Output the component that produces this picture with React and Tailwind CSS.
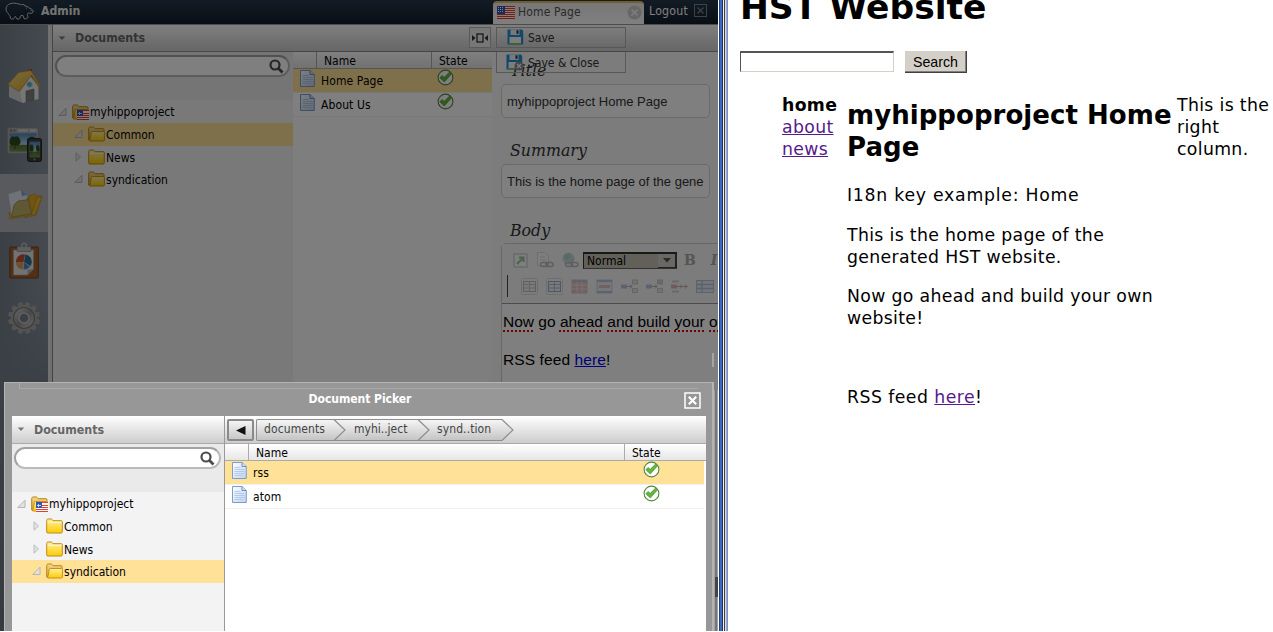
import React from "react";

const Defs = () => (
  <svg width="0" height="0" className="absolute">
    <defs>
      <linearGradient id="fold" x1="0" y1="0" x2="0" y2="1">
        <stop offset="0" stopColor="#fff0a0" />
        <stop offset="1" stopColor="#fdcc00" />
      </linearGradient>
      <linearGradient id="foldBack" x1="0" y1="0" x2="0" y2="1">
        <stop offset="0" stopColor="#f3d78a" />
        <stop offset="1" stopColor="#d9a62e" />
      </linearGradient>
      <linearGradient id="gold" x1="0" y1="0" x2="1" y2="1">
        <stop offset="0" stopColor="#f6dc7c" />
        <stop offset="1" stopColor="#d8a020" />
      </linearGradient>
      <linearGradient id="steel" x1="0" y1="0" x2="1" y2="1">
        <stop offset="0" stopColor="#d4d4d4" />
        <stop offset="0.5" stopColor="#8f8f8f" />
        <stop offset="1" stopColor="#cfcfcf" />
      </linearGradient>
      <linearGradient id="crumb" x1="0" y1="0" x2="0" y2="1">
        <stop offset="0" stopColor="#f6f6f6" />
        <stop offset="1" stopColor="#c4c4c4" />
      </linearGradient>
      <linearGradient id="page" x1="0" y1="0" x2="1" y2="1">
        <stop offset="0" stopColor="#ffffff" />
        <stop offset="1" stopColor="#bcd3f2" />
      </linearGradient>
      <linearGradient id="sky" x1="0" y1="0" x2="0" y2="1">
        <stop offset="0" stopColor="#4a86bd" />
        <stop offset="0.6" stopColor="#b4cfe0" />
        <stop offset="0.66" stopColor="#55753a" />
        <stop offset="1" stopColor="#6a8c48" />
      </linearGradient>
    </defs>
  </svg>
);

const Hippo = () => (
  <svg width="32" height="20" viewBox="0 0 32 20" fill="none" stroke="#c9d0d6" strokeWidth="1">
    <path d="M5.5 3.5 C8 1.5 13 2 16 3 C18 3.6 19.5 4 21 3.5 L22 5 C24 5 25.5 6 27 7.5 C29 8 30.5 9 30 11 C29.5 12.5 27 12.5 25.5 12 C24 12.5 24 14 25 15.5 C25 17.5 22.5 18.5 21 17.5 L20 14.5 C18.5 14 17 15 17 16 C17.5 18 15.5 18.5 14 18 L12.5 15.5 L11.5 16 C11.5 18.5 8.5 18.5 7.5 17.5 C7.5 15 6 14 5.2 12.5 C2.5 10 2 6 5.5 3.5 Z" />
    <path d="M23.5 6.5v1M28 9v1" />
  </svg>
);

const Flag = ({ w = 18, h = 13 }) => (
  <svg width={w} height={h} viewBox="0 0 18 13" shapeRendering="crispEdges" className="shrink-0">
    <rect width="18" height="13" fill="#fff" />
    {[0, 2, 4, 6, 8, 10, 12].map((y) => (
      <rect key={y} y={y} width="18" height="1" fill="#e8402c" />
    ))}
    <rect width="8" height="8" fill="#3355b8" />
    {[1, 3, 5].map((y) => [1, 3, 5].map((x) => <rect key={x + "-" + y} x={x} y={y} width="1" height="1" fill="#fff" />))}
  </svg>
);

const SmallFlag = () => (
  <svg width="12" height="10" viewBox="0 0 12 10" shapeRendering="crispEdges">
    <rect width="12" height="10" fill="#fff" />
    {[0, 3, 5, 7, 9].map((y) => (
      <rect key={y} y={y} width="12" height="1" fill="#e0402c" />
    ))}
    <rect width="6" height="6" fill="#3355b8" />
    <path d="M2.500 1.500v3M1 3h3.500" stroke="#c8d4f4" />
  </svg>
);

const Folder = ({ open }) => (
  <svg width="17" height="16" viewBox="0 0 17 16" className="shrink-0">
    {open ? (
      <>
        <path d="M.7 14V2.6C.7 1.5 1.3 1 2.2 1h3c.8 0 1.2.9 1.8 1.7h8c.8 0 1 .5 1 1.1V14z" fill="url(#foldBack)" stroke="#b9861b" />
        <path d="M1.6 15 3.4 6.2c.1-.5.4-.7.9-.7h11.2c.6 0 .9.3.9.9V13.900c0 .7-.3 1.100-1 1.100z" fill="url(#fold)" stroke="#c8921c" />
      </>
    ) : (
      <>
        <path d="M.7 14V2.600C.7 1.500 1.300 1 2.200 1h3c.8 0 1.200.9 1.800 1.700h8.300c.8 0 1 .5 1 1.100V13.800c0 .8-.4 1.200-1.200 1.200H2C1.200 15 .7 14.700.7 14z" fill="url(#fold)" stroke="#c08a18" />
        <path d="M1.500 4.300h14" stroke="#fffbe0" strokeWidth=".9" />
      </>
    )}
  </svg>
);

const RootFolder = () => (
  <span className="relative flex">
    <Folder open />
    <span className="absolute top-[6px] left-[5px] flex">
      <SmallFlag />
    </span>
  </span>
);

const Twist = ({ open }) => (
  <svg width="9" height="10" viewBox="0 0 9 10" className="shrink-0">
    {open ? (
      <path d="M8 1.200V8.500H.8z" fill="#e2e2e2" stroke="#b0b0b0" strokeWidth=".9" />
    ) : (
      <path d="M2 .8 6.500 5 2 9.200z" fill="#dfe3e6" stroke="#b3b8bc" strokeWidth=".9" />
    )}
  </svg>
);

const Doc = () => (
  <svg width="15" height="17" viewBox="0 0 15 17" className="shrink-0">
    <path d="M.5 .5h9.500L14.300 4.500v12H.5z" fill="url(#page)" stroke="#7f9cc9" />
    <path d="M10 .5v4h4.300" fill="#cfe0f7" stroke="#6f8fc2" />
    <path d="M2.500 5.500h6M2.500 7.500h10M2.500 9.500h10M2.500 11.500h10M2.500 13.500h8" stroke="#aac2e4" strokeWidth=".8" />
  </svg>
);

const Ok = () => (
  <svg width="17" height="17" viewBox="0 0 17 17" className="shrink-0">
    <circle cx="8.500" cy="8.500" r="7.400" fill="#fff" stroke="#58873f" strokeWidth="1.100" />
    <path d="M2.800 8.800 5 6.400 7.200 8.300 12.600 3 14.400 5 7.300 13z" fill="#62b63c" stroke="#3f8a24" strokeWidth=".6" />
  </svg>
);

const Glass = () => (
  <svg width="15" height="15" viewBox="0 0 15 15" fill="none" stroke="#4c4c4c">
    <circle cx="6" cy="6" r="4.500" strokeWidth="2.200" />
    <path d="M9.500 9.500 13.500 13.500" strokeWidth="2.800" />
  </svg>
);

const Floppy = ({ closing }) => (
  <svg width="18" height="17" viewBox="0 0 18 17" className="shrink-0">
    <path d="M.5 .5h14.500l1.200 1.500v13.500H.5z" fill="#2191d6" />
    <rect x="3.500" y=".5" width="9" height="5.500" fill="#eef3f6" />
    <rect x="9.500" y="1.300" width="2" height="3.500" fill="#333" />
    <rect x="2.500" y="8" width="11.500" height="7" fill="#fafafa" />
    <rect x="2.500" y="14" width="11.500" height="1.500" fill="#7fc64a" />
    {closing && (
      <g>
        <circle cx="13" cy="12" r="4.500" fill="#8d8d8d" />
        <path d="M11 10l4 4M15 10l-4 4" stroke="#fff" strokeWidth="1.300" />
      </g>
    )}
  </svg>
);

const House = () => (
  <svg width="36" height="38" viewBox="0 0 36 38">
    <path d="M3 18.500 13.500 9 18 36 3 30z" fill="#c4c4c4" />
    <path d="M13.500 24.500 24 9 32.500 19V32L16.500 36z" fill="#ececec" />
    <path d="M3 30V19L13 24.500 16.500 36z" fill="#d2d2d2" />
    <path d="M21.500 3 26 2 26.500 8 22 8z" fill="#c9301a" />
    <path d="M2 17.500 12.500 5.500 25 3.500 34.500 19 32.500 19.500 25.500 8 13.500 24.500z" fill="url(#gold)" stroke="#b98a28" strokeWidth=".7" />
    <circle cx="23.500" cy="17.500" r="2.700" fill="#5fa8cc" stroke="#b8d0dc" />
    <path d="M20 24 28 22V33L20 35z" fill="#808080" stroke="#666" strokeWidth=".6" />
  </svg>
);

const Trees = () => (
  <>
    <path d="M0 8 C0 3 3 1 5 3 C8 1 11 4 11 8 C11 11 8 12 6 11 V15 H5 V11 C2 12 0 11 0 8Z" fill="#2f4a1d" />
    <path d="M18 9 C17 4 20 2 24 3 C27 4 28 6 28 9 C28 12 25 12 24 11 V15 H23 V11 C21 12 19 11 18 9Z" fill="#2f4a1d" />
  </>
);

const Screens = () => (
  <svg width="36" height="38" viewBox="0 0 36 38">
    <rect x=".5" y="1.500" width="31" height="26" rx="1.500" fill="#a8a8a8" stroke="#8a8a8a" />
    <path d="M3 4.500h2M6.500 4.500h2" stroke="#777" strokeWidth="2" />
    <path d="M11 4.500h10M22.500 4.500h7" stroke="#d0d0d0" strokeWidth="2.500" />
    <rect x="2.500" y="7.500" width="27" height="18" fill="url(#sky)" />
    <g transform="translate(2.500 8)">
      <Trees />
    </g>
    <rect x="20.500" y="12.500" width="14" height="23" rx="2" fill="#3c3c3c" stroke="#222" />
    <rect x="22.500" y="15.500" width="10.500" height="16" fill="url(#sky)" />
    <g transform="translate(22.500 16.500) scale(.37 .8)">
      <Trees />
    </g>
    <circle cx="27.500" cy="33.500" r="1" fill="#999" />
  </svg>
);

const OpenDocs = () => (
  <svg width="36" height="34" viewBox="0 0 36 34">
    <path d="M22 8 28 6 30 8 35 8 29 27 18 30z" fill="#e0a824" stroke="#b98510" strokeWidth=".6" />
    <path d="M1 6 14 2 20 7 24 28 5 30z" fill="#dfe4ec" stroke="#aab4c2" strokeWidth=".6" />
    <path d="M14 2 15 8 20 7z" fill="#7fa3d4" />
    <path d="M2 24 2.500 31 28 27 35 9 30 9 24.500 26 5 29.500z" fill="#e6b433" stroke="#b98510" strokeWidth=".6" />
    <path d="M7 17 11 13 19 12 21 10 24.500 26 4.500 29z" fill="#bfb168" stroke="#8f7f32" strokeWidth=".7" />
  </svg>
);

const Clipboard = () => (
  <svg width="30" height="37" viewBox="0 0 30 37">
    <rect x=".8" y="5" width="28.500" height="31" rx="1" fill="#a0602c" stroke="#7c3f12" />
    <path d="M4.500 8h20v19l-6 6h-14z" fill="#e4e4e4" stroke="#aaa" strokeWidth=".6" />
    <path d="M18.500 33v-5l6-1z" fill="#b0b0b0" />
    <rect x="8" y="4.500" width="14" height="5" rx="1" fill="#bcbcbc" stroke="#777" strokeWidth=".6" />
    <circle cx="15" cy="3.500" r="2.300" fill="none" stroke="#b8b8b8" strokeWidth="1.500" />
    <path d="M14.500 20 16 12.500A7.500 7.500 0 0 0 7 20.500z" fill="#c0502e" />
    <path d="M14.500 20 7 21A7.500 7.500 0 0 0 13.500 27.500z" fill="#d6a050" />
    <path d="M15 20 16.500 12.500A7.500 7.500 0 0 1 21.500 24z" fill="#2b6f8e" />
    <path d="M15 20.500 21 24.500A7.500 7.500 0 0 1 14.500 27.500z" fill="#4d86c8" />
  </svg>
);

const Gear = () => (
  <svg width="34" height="34" viewBox="-17 -17 34 34">
    {[0, 30, 60, 90, 120, 150, 180, 210, 240, 270, 300, 330].map((a) => (
      <path key={a} transform={`rotate(${a + 15})`} d="M-3.300-11 L-2-16 H2 L3.300-11z" fill="#a6a6a6" />
    ))}
    <circle r="12.800" fill="#a6a6a6" />
    <circle r="10.500" fill="url(#steel)" stroke="#777" strokeWidth="1.200" />
    <circle r="5" fill="#747f8b" stroke="#c4c4c4" strokeWidth="1.500" />
  </svg>
);

const SearchBox = () => (
  <div className="h-[48px] bg-[#eaeaea] pt-[3px] pl-[2px]">
    <div className="flex h-[22px] w-[236px] max-w-[calc(100%-3px)] items-center justify-end rounded-full border-2 border-[#a2a2a2] border-r-[#bbb] border-b-[#bbb] bg-white pr-1">
      <Glass />
    </div>
  </div>
);

const PanelTitle = () => (
  <>
    <svg width="8" height="5" viewBox="0 0 8 5">
      <path d="M.8 .5h6.400L4 4z" fill="#777" />
    </svg>
    <span className="mt-px ml-[9px] text-[12.300px] font-bold text-[#666]">Documents</span>
  </>
);

const Tree = ({ rows, selected, childPad }) => (
  <div className="flex flex-col">
    {rows.map((r) => (
      <div
        key={r.name}
        className={
          (r.name === selected ? "bg-[#ffe198] " : "") +
          (r.root ? "h-[23px] pl-[5px]" : "h-[22.600px] " + childPad) +
          " flex items-center"
        }
      >
        <Twist open={r.open} />
        <span className="ml-[5px] flex">{r.root ? <RootFolder /> : <Folder open={r.open} />}</span>
        <span className={(r.root ? "" : "mt-[2px] ") + "ml-[1px] text-[12px] text-black"}>{r.name}</span>
      </div>
    ))}
  </div>
);

const Row = ({ name, on, stateWidth }) => (
  <div className={(on ? "bg-[#ffe198]" : "bg-white") + " flex h-[24px] border-b border-[#f1f1f1]"}>
    <span className="w-[28px] pl-[7px] pt-px">
      <Doc />
    </span>
    <span className="flex-1 pt-[4px] text-[12px] leading-[16px] tracking-[0.1px] text-black">{name}</span>
    <span className={stateWidth}>
      <Ok />
    </span>
  </div>
);

const Field = ({ label, value, className }) => (
  <div className={className}>
    <div className="h-[24px] pt-px pl-[9px] font-['DejaVu_Serif',serif] text-[15.800px] leading-[20px] italic text-[#333]">{label}</div>
    <div className="flex h-[34px] w-[209px] items-center overflow-hidden rounded-[5px] border border-[#d4d4d4] bg-white pt-px pl-[5px] font-['Liberation_Sans',sans-serif] text-[13px] whitespace-nowrap text-[#333]">
      {value}
    </div>
  </div>
);

const TableIcon = ({ kind }) => {
  if (kind < 4)
    return (
      <svg width="17" height="17" viewBox="0 0 17 17" fill="none" className="shrink-0">
        {kind < 2 && <rect x=".5" y=".5" width="16" height="16" rx="1" stroke="#ccc" />}
        {kind < 2 ? (
          <rect x="2.500" y="3.500" width="12" height="10" fill="#f4f4f4" stroke={["#999", "#5f80b8"][kind]} />
        ) : (
          <rect x="1" y="2" width="15" height="13" fill={["#e0a0a0", "#e4e8f2"][kind - 2]} stroke={["#c0a0b0", "#a8b6d4"][kind - 2]} />
        )}
        {kind < 2 ? (
          <path d="M2.500 6.500h12M2.500 10h12M8.500 4v9" stroke={["#aaa", "#7e98c8"][kind]} />
        ) : (
          <path d={kind === 2 ? "M1 3h15" : "M1 3h15M1 14h15"} stroke="#8ea2cc" strokeWidth="2" />
        )}
        {kind === 2 && <path d="M1 7h15M1 11h15M6 4v11M11 4v11" stroke="#f0d8d8" />}
        {kind === 3 && <path d="M3 8.500h11" stroke="#dba0a0" strokeWidth="3" />}
      </svg>
    );
  if (kind === 7)
    return (
      <svg width="18" height="17" viewBox="0 0 18 17" className="shrink-0">
        <rect x=".5" y="2.500" width="17" height="12" fill="#dfe7f5" stroke="#8ea2c8" />
        <path d="M1 6.500h17M1 10.500h17M6 3v11" stroke="#8ea2c8" strokeWidth="1.500" />
      </svg>
    );
  return (
    <svg width="17" height="17" viewBox="0 0 17 17" fill="none" className="shrink-0">
      <rect y="6.500" width="6" height="4" fill={kind === 6 ? "#dc8a8a" : "#8fa4d0"} />
      <path d="M6 8.500h5M9 6.500l2 2-2 2" stroke="#888" />
      {kind === 6 ? (
        <>
          <path d="M1 3.500h7M1 13.500h7" stroke="#bbb" strokeWidth="2" />
          <path d="M8 8.500h8M14 6.500l2 2-2 2" stroke="#a77" />
        </>
      ) : (
        <>
          <rect x="11.500" y="2" width="5" height="4" fill={kind === 5 ? "#bbb" : "#ddd"} stroke="#b0b0b0" />
          <rect x="11.500" y="10.500" width="5" height="4" fill="#ddd" stroke="#b0b0b0" />
        </>
      )}
    </svg>
  );
};

const ChainIcon = ({ globe }) => (
  <svg width="18" height="17" viewBox="0 0 18 17" fill="none" className="shrink-0">
    {globe ? (
      <>
        <circle cx="7.500" cy="6.500" r="6" fill="#a9c4e0" />
        <path d="M3 4 7 1.500 10 4 7 8 4 8z M10 7 13 6 11 11z" fill="#8cc08c" />
      </>
    ) : (
      <path d="M1.500 .5h7L12.500 4.500V14h-11z M4 5h5M4 8h6" fill="#fff" stroke="#ccc" />
    )}
    <rect x="4.500" y="10.500" width="7" height="4" rx="2" stroke="#999" strokeWidth="1.500" />
    <rect x="10" y="10.500" width="7" height="4" rx="2" stroke="#999" strokeWidth="1.500" />
  </svg>
);

const Misspelt = ({ children }) => (
  <span className="underline decoration-red-600 decoration-dotted decoration-[1.500px] underline-offset-[3px]">{children}</span>
);

const barBg = "bg-linear-to-b from-[#fff] to-[#cdcdcd]";

const Cms = () => (
  <div className="flex h-[632px] w-[718px] flex-col overflow-hidden bg-white">
    <div className="flex h-[24px] shrink-0 bg-linear-to-b from-[#26384a] to-[#121d2a]">
      <div className="flex w-[493px] items-center pb-[2px] pl-[3px]">
        <Hippo />
        <span className="ml-[6px] text-[12.200px] font-bold text-[#e8e8e8]">Admin</span>
      </div>
      <div className="mt-px flex w-[151px] items-start rounded-t-[4px] border-t-2 border-[#e2bd58] bg-linear-to-b from-[#eee] to-[#fff] pl-[4px]">
        <span className="flex pt-[3px]">
          <Flag />
        </span>
        <span className="ml-[3px] flex-1 pt-px text-[12px] leading-[16px] tracking-[0.15px] text-[#555]">Home Page</span>
        <svg width="15" height="15" viewBox="0 0 15 15" className="mt-[2px] mr-[2px]">
          <circle cx="7.500" cy="7.500" r="7" fill="#cfcfcf" />
          <path d="M4.500 4.500l6 6M10.500 4.500l-6 6" stroke="#fff" strokeWidth="1.400" />
        </svg>
      </div>
      <span className="ml-[5px] pt-[3px] text-[12.200px] leading-[16px] font-medium tracking-[0.25px] text-white">Logout</span>
      <svg width="13" height="13" viewBox="0 0 13 13" fill="none" className="mt-[4px] ml-[6px]">
        <rect x=".5" y=".5" width="12" height="12" stroke="#7c858d" />
        <path d="M3.500 3.500l6 6M9.500 3.500l-6 6" stroke="#7c858d" strokeWidth="1.300" />
      </svg>
    </div>
    <div className="flex min-h-0 flex-1 border-t border-[#999]">
      <div className="flex w-[48px] shrink-0 flex-col bg-linear-to-r from-[#76808b] to-[#8a95a2]">
        <div className="flex h-[91px] items-end justify-center pb-[11px]">
          <House />
        </div>
        <div className="flex h-[58px] items-start pt-[10px] pl-[7px]">
          <Screens />
        </div>
        <div className="flex h-[58px] items-center bg-[#b0b5ba] pt-[4px] pl-[7px]">
          <OpenDocs />
        </div>
        <div className="flex h-[58px] items-start pt-[10px] pl-[9px]">
          <Clipboard />
        </div>
        <div className="flex flex-1 bg-linear-to-b from-transparent via-[#76808b] via-30% to-[#6c7682] pt-[11px] pl-[7px]">
          <Gear />
        </div>
      </div>
      <div className="w-[5px] shrink-0 border-r border-[#888] bg-[#e0e0e0]" />
      <div className="flex min-w-0 flex-1 flex-col">
        <div className={"flex h-[27px] shrink-0 border-b border-[#8e8e8e] " + barBg}>
          <div className="flex w-[416px] items-center pl-[5px]">
            <PanelTitle />
          </div>
          <div className="mt-[2px] flex h-[21px] w-[22px] items-center justify-center border border-[#b4b4b4] bg-[#eee]">
            <svg width="16" height="10" viewBox="0 0 16 10">
              <path d="M0 2l3.500 3L0 8zM16 2l-3.500 3L16 8z" fill="#333" />
              <rect x="5" y="1" width="6" height="8" fill="none" stroke="#333" strokeWidth="1.300" />
            </svg>
          </div>
          <div className="mt-[2px] ml-[5px] flex h-[21px] w-[130px] items-center border border-[#b0b0b0] pl-[10px]">
            <Floppy />
            <span className="ml-[3px] text-[12px] text-[#333]">Save</span>
          </div>
        </div>
        <div className="flex min-h-0 flex-1">
          <div className="w-[240px] shrink-0 bg-[#f3f3f3]">
            <SearchBox />
            <Tree
              selected="Common"
              childPad="pl-[21px]"
              rows={[
                { name: "myhippoproject", open: true, root: true },
                { name: "Common", open: true },
                { name: "News" },
                { name: "syndication", open: true },
              ]}
            />
          </div>
          <div className="w-[199px] shrink-0 bg-[#fdfdfd]">
            <div className="flex h-[17px] border-b border-[#aaa] bg-linear-to-b from-[#fff] to-[#e4e4e4] text-[12px] leading-[18px] text-black">
              <span className="w-[24px] border-r border-[#aaa]" />
              <span className="w-[115px] border-r border-[#aaa] pl-[7px]">Name</span>
              <span className="pl-[7px]">State</span>
            </div>
            <Row name="Home Page" on stateWidth="w-[55px]" />
            <Row name="About Us" stateWidth="w-[55px]" />
          </div>
          <div className="min-w-0 flex-1 bg-[#f8f8f8] pl-[9px]">
            <div className="relative -ml-[5px] flex h-[21px] w-[130px] items-center border border-t-0 border-[#b0b0b0] pl-[9px]">
              <Floppy closing />
              <span className="mt-px ml-[4px] text-[12px] whitespace-nowrap text-[#333]">Save &amp; Close</span>
            </div>
            <Field label="Title" value="myhippoproject Home Page" className="-mt-[13px]" />
            <Field label="Summary" value="This is the home page of the gene" className="mt-[22px]" />
            <div className="mt-[22px] h-[23px] pt-px pl-[9px] font-['DejaVu_Serif',serif] text-[15.800px] leading-[20px] italic text-[#333]">Body</div>
            <div className="rounded-tl-[5px] border-t border-l border-[#d0d0d0] bg-white">
              <div className="mr-[-4px] flex h-[60px] flex-col overflow-hidden border-b border-[#999] bg-[#f8f8f8] pl-[5px]">
                <div className="mt-[7px] flex h-[19px] items-center gap-[7px] pl-[6px]">
                  <span className="flex items-center gap-[7px] opacity-60">
                    <svg width="16" height="15" viewBox="0 0 16 15" fill="none">
                      <rect x="1" y="1" width="13" height="13" fill="#fff" stroke="#93a3ba" />
                      <path d="M4 11l6-6M6 4.500h4.500V9" stroke="#5da85d" strokeWidth="2" />
                    </svg>
                    <ChainIcon />
                    <ChainIcon globe />
                  </span>
                  <div className="-ml-[3px] flex h-[17px] w-[94px] shrink-0 items-center justify-between border border-t-2 border-r-[#444] border-b-[#666] border-t-[#333] border-l-[#333] bg-[#c4c0b0] pl-[3px] text-[12px] text-black">
                    Normal
                    <span className="flex h-[14px] w-[18px] items-center justify-center border-r border-b border-[#444] bg-[#d4d0c8]">
                      <svg width="8" height="5" viewBox="0 0 8 5">
                        <path d="M0 0h8L4 4.500z" fill="#555" />
                      </svg>
                    </span>
                  </div>
                  <span className="font-['DejaVu_Serif',serif] text-[14px] font-bold text-[#aaa]">B</span>
                  <span className="ml-[8px] font-['DejaVu_Serif',serif] text-[14px] font-bold italic text-[#aaa]">I</span>
                </div>
                <div className="mt-[4px] flex h-[24px] items-center">
                  <span className="h-[22px] w-px bg-[#444]" />
                  <div className="ml-[13px] flex gap-[8px] opacity-60">
                    {[0, 1, 2, 3, 4, 5, 6, 7].map((k) => (
                      <TableIcon key={k} kind={k} />
                    ))}
                  </div>
                </div>
              </div>
              <div className="pt-[8px] pl-[1px] font-['Liberation_Sans',sans-serif] text-[15.500px] leading-[19px] whitespace-nowrap text-black">
                <p>
                  <Misspelt>Now</Misspelt> go <Misspelt>ahead</Misspelt> <Misspelt>and</Misspelt> <Misspelt>build</Misspelt> <Misspelt>your</Misspelt> <Misspelt>own</Misspelt>
                </p>
                <p className="mt-[19px] tracking-[0.1px]">
                  RSS feed <a className="text-[#0000ee] underline">here</a>!
                </p>
                <div className="h-[262px]" />
              </div>
            </div>
          </div>
        </div>
      </div>
    </div>
  </div>
);

const Chevron = ({ last }) => (
  <svg width="14" height="22" viewBox="0 0 14 22" className="shrink-0">
    <path d={last ? "M0 .5H2L13 11 2 21.500H0z" : "M0 0H14V22H0z"} fill="url(#crumb)" />
    {!last && <path d="M0 .5h14M0 21.500h14" stroke="#8e8e8e" />}
    <path d={last ? "M0 .5H2L13 11 2 21.500H0" : "M2 .5 13 11 2 21.500"} fill="none" stroke="#8e8e8e" strokeWidth="1.200" />
  </svg>
);

const crumbBg = "h-[22px] border-y border-[#8e8e8e] bg-linear-to-b from-[#f6f6f6] to-[#c4c4c4] leading-[19px] ";

const Picker = () => (
  <div className="absolute top-[382px] left-[4px] flex h-[250px] w-[710px] flex-col border-t border-r-2 border-l border-[#b4b4b4] bg-[#979797] pr-[6px] pl-[7px]">
    <div className="absolute top-0 right-[14px] left-[14px] h-[6px] border-b border-l border-[#a8a8a8]" />
    <div className="flex h-[33px] shrink-0 items-start pt-[8px]">
      <span className="flex-1 pl-[24px] text-center text-[12.100px] leading-[16px] font-bold tracking-[-0.08px] text-white">Document Picker</span>
      <svg width="17" height="17" viewBox="0 0 17 17" fill="none" stroke="#fff" className="mt-[1px] mr-[5px]">
        <rect x="1" y="1" width="15" height="15" strokeWidth="1.500" />
        <path d="M4.800 4.800l7.400 7.400M12.200 4.800l-7.400 7.400" strokeWidth="2.200" />
      </svg>
    </div>
    <div className="flex min-h-0 flex-1 bg-white">
      <div className="w-[213px] shrink-0 border-r border-[#999] bg-[#f3f3f3]">
        <div className={"flex h-[28px] items-center border-b border-[#aaa] pl-[5px] " + barBg}>
          <PanelTitle />
        </div>
        <SearchBox />
        <Tree
          selected="syndication"
          childPad="pl-[20px]"
          rows={[
            { name: "myhippoproject", open: true, root: true },
            { name: "Common" },
            { name: "News" },
            { name: "syndication", open: true },
          ]}
        />
      </div>
      <div className="flex min-w-0 flex-1 flex-col">
        <div className={"flex h-[28px] shrink-0 border-b border-[#aaa] pt-[3px] pl-[2px] text-[12px] text-[#444] " + barBg}>
          <div className="flex h-[22px] w-[27px] items-center justify-center rounded-[2px] border-2 border-[#8a8a8a] bg-linear-to-b from-[#f4f4f4] to-[#c8c8c8]">
            <svg width="10" height="9" viewBox="0 0 10 9">
              <path d="M0 4.500 9.500 0v9z" fill="#111" />
            </svg>
          </div>
          <div className={"ml-[2px] w-[76px] rounded-l-[2px] border-l pl-[7px] tracking-[0.1px] " + crumbBg}>documents</div>
          <Chevron />
          <div className={"w-[70px] pl-[8px] " + crumbBg}>myhi..ject</div>
          <Chevron />
          <div className={"w-[70px] pl-[7px] tracking-[0.1px] " + crumbBg}>synd..tion</div>
          <Chevron last />
        </div>
        <div className="flex h-[17px] shrink-0 border-b border-[#aaa] bg-linear-to-b from-[#fff] to-[#e6e6e6] text-[12px] leading-[18px] text-black">
          <span className="w-[24px] border-r border-[#aaa]" />
          <span className="w-[376px] border-r border-[#aaa] pl-[7px]">Name</span>
          <span className="pl-[7px]">State</span>
        </div>
        <div className="mr-[2px]">
          <Row name="rss" on stateWidth="w-[61px]" />
          <Row name="atom" stateWidth="w-[61px]" />
        </div>
      </div>
    </div>
  </div>
);

const Site = () => (
  <div className="flex-1 overflow-hidden bg-white pl-[12px] font-['DejaVu_Sans',sans-serif] text-[17.300px] leading-[22px] tracking-[0.34px] text-black">
    <h1 className="-mt-[13px] h-[64px] text-[34.500px] leading-[40px] font-bold tracking-normal">HST Website</h1>
    <div className="flex gap-[11px] font-['Liberation_Sans',sans-serif] text-[14.200px] tracking-normal">
      <div className="h-[21px] w-[154px] border border-t-2 border-t-[#555] border-l-[#555] border-r-[#d4d0c8] border-b-[#d4d0c8]" />
      <div className="flex h-[22px] w-[62px] items-center justify-center border-r border-b border-[#404040] bg-[#d4d0c8] pt-px shadow-[inset_-1px_-1px_0_#808080]">Search</div>
    </div>
    <div className="flex pt-[21px] pl-[42px]">
      <nav className="flex w-[65px] shrink-0 flex-col">
        <b>home</b>
        <a className="text-[#551a8b] underline">about</a>
        <a className="text-[#551a8b] underline">news</a>
      </nav>
      <main className="w-[330px] shrink-0">
        <h2 className="mt-[5px] text-[26px] leading-[32px] font-bold tracking-[0.05px] whitespace-nowrap">
          myhippoproject Home
          <br />
          Page
        </h2>
        <p className="mt-[21px] tracking-[0.75px]">I18n key example: Home</p>
        <p className="mt-[18px]">
          This is the home page of the
          <br />
          generated HST website.
        </p>
        <p className="mt-[17px]">
          Now go ahead and build your own
          <br />
          website!
        </p>
        <p className="mt-[57px] tracking-[0.45px]">
          RSS feed <a className="text-[#551a8b] underline">here</a>!
        </p>
      </main>
      <aside className="whitespace-nowrap">
        This is the
        <br />
        right
        <br />
        column.
      </aside>
    </div>
  </div>
);

export default function App() {
  return (
    <div className="flex h-[632px] w-[1273px] overflow-hidden bg-white font-['DejaVu_Sans_Condensed','DejaVu_Sans',sans-serif]">
      <Defs />
      <div className="relative h-[631px] w-[718px] shrink-0 overflow-hidden">
        <Cms />
        <div className="absolute inset-0 bg-black/50" />
        <div className="absolute top-[353px] left-[712px] h-[14px] w-[2px] border-x border-[#a5a5a5]" />
        <Picker />
        <div className="absolute top-[390px] left-[714px] h-[241px] w-[4px] border-x border-[#a0a0a0] bg-[#777]" />
        <div className="absolute top-[577px] left-[715px] h-[20px] w-[3px] bg-[#444]" />
      </div>
      <div className="flex h-[631px] w-[10px] shrink-0">
        <span className="w-px bg-white" />
        <span className="w-px bg-[#24426f]" />
        <span className="w-[2px] bg-[#3c6bc6]" />
        <span className="w-px bg-[#26344e]" />
        <span className="w-px bg-[#f2f2f2]" />
        <span className="w-px bg-[#404040]" />
        <span className="w-px bg-[#d8dcea]" />
        <span className="w-px bg-[#96a7d8]" />
        <span className="w-px bg-[#7f8fc0]" />
      </div>
      <Site />
    </div>
  );
}
